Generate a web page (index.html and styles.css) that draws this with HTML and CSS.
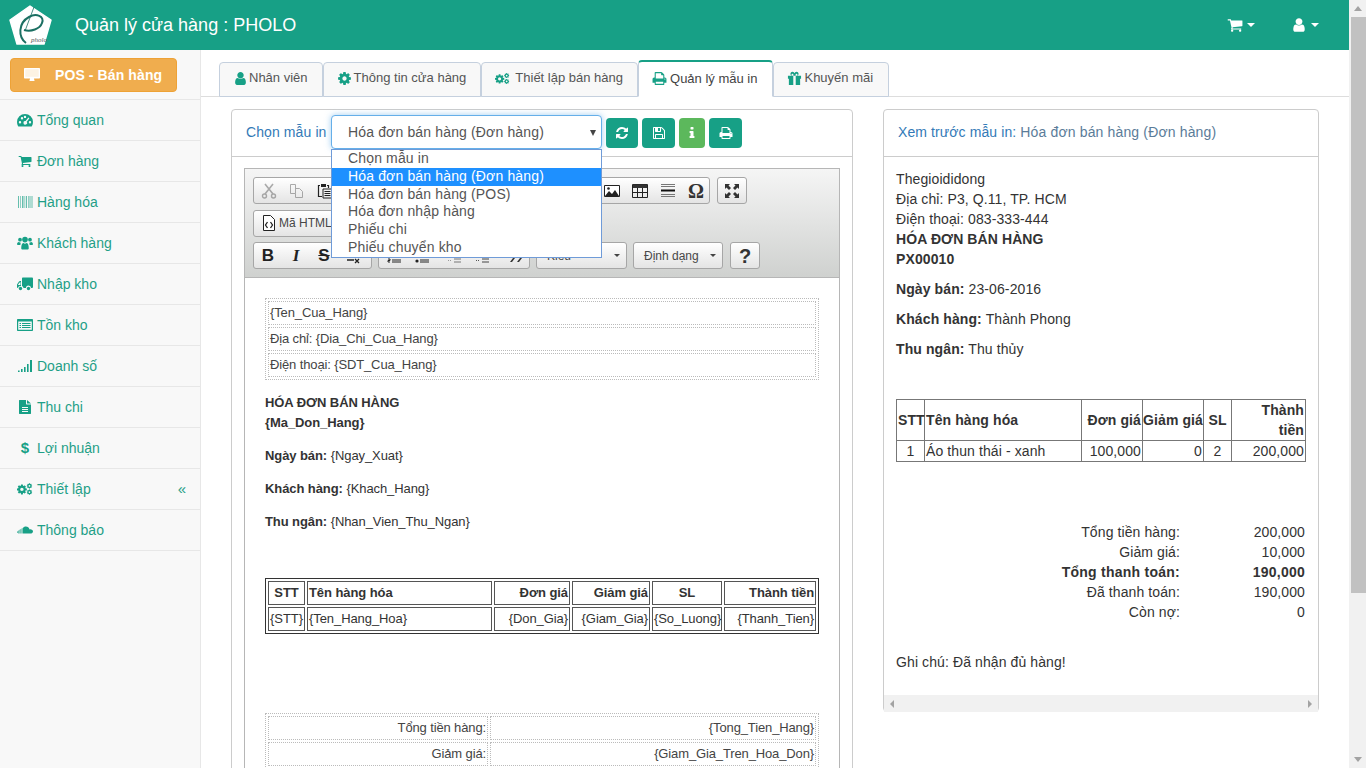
FILE: index.html
```html
<!DOCTYPE html>
<html lang="vi">
  <head>
    <meta charset="UTF-8" />
    <title>Quản lý cửa hàng : PHOLO</title>
    <link rel="stylesheet" href="styles.css">
  </head>
  <body>
    <svg class="sprites" aria-hidden="true">
      <symbol id="i-user" viewBox="0 0 1792 1792"><path d="M1536 1399q0 109-62.5 187t-150.5 78h-854q-88 0-150.5-78t-62.5-187q0-85 8.5-160.5t31.5-152 58.5-131 94-89 134.5-34.5q131 128 313 128t313-128q76 0 134.5 34.5t94 89 58.5 131 31.5 152 8.5 160.5zm-256-887q0 159-112.5 271.5t-271.5 112.5-271.5-112.5-112.5-271.5 112.5-271.5 271.5-112.5 271.5 112.5 112.5 271.5z"/></symbol>
      <symbol id="i-cart" viewBox="0 0 1792 1792"><path d="M704 1536q0 52-38 90t-90 38-90-38-38-90 38-90 90-38 90 38 38 90zm896 0q0 52-38 90t-90 38-90-38-38-90 38-90 90-38 90 38 38 90zm128-1088v512q0 24-16.5 42.5t-40.5 21.5l-1044 122q13 60 13 70 0 16-24 64h920q26 0 45 19t19 45-19 45-45 19h-1024q-26 0-45-19t-19-45q0-11 8-31.5t16-36 21.5-40 15.5-29.5l-177-823h-204q-26 0-45-19t-19-45 19-45 45-19h256q16 0 28.5 6.5t19.5 15.5 13 24.5 8 26 5.5 29.5 4.5 26h1201q26 0 45 19t19 45z"/></symbol>
      <symbol id="i-print" viewBox="0 0 1792 1792"><path d="M448 1536h896v-256h-896v256zm0-640h896v-384h-160q-40 0-68-28t-28-68v-160h-640v640zm1152 64q0-26-19-45t-45-19-45 19-19 45 19 45 45 19 45-19 19-45zm128 0v416q0 13-9.5 22.5t-22.5 9.5h-224v160q0 40-28 68t-68 28h-960q-40 0-68-28t-28-68v-160h-224q-13 0-22.5-9.5t-9.5-22.5v-416q0-79 56.5-135.5t135.5-56.5h64v-544q0-40 28-68t68-28h672q40 0 88 20t76 48l152 152q28 28 48 76t20 88v256h64q79 0 135.5 56.5t56.5 135.5z"/></symbol>
      <symbol id="i-refresh" viewBox="0 0 1792 1792"><path d="M1639 1056q0 5-1 7-64 268-268 434.5t-478 166.5q-146 0-282.5-55t-243.5-157l-129 129q-19 19-45 19t-45-19-19-45v-448q0-26 19-45t45-19h448q26 0 45 19t19 45-19 45l-137 137q71 66 161 102t187 36q134 0 250-65t186-179q11-17 53-117 8-23 30-23h192q13 0 22.5 9.5t9.5 22.5zm25-800v448q0 26-19 45t-45 19h-448q-26 0-45-19t-19-45 19-45l138-138q-148-137-349-137-134 0-250 65t-186 179q-11 17-53 117-8 23-30 23h-199q-13 0-22.5-9.5t-9.5-22.5v-7q65-268 270-434.5t480-166.5q146 0 284 55.5t245 156.5l130-129q19-19 45-19t45 19 19 45z"/></symbol>
      <symbol id="i-save" viewBox="0 0 1792 1792"><path d="M512 1536h768v-384h-768v384zm896 0h128v-896q0-14-10-38.5t-20-34.5l-281-281q-10-10-34-20t-39-10v416q0 40-28 68t-68 28h-576q-40 0-68-28t-28-68v-416h-128v1280h128v-416q0-40 28-68t68-28h832q40 0 68 28t28 68v416zm-384-928v-320q0-13-9.5-22.5t-22.5-9.5h-192q-13 0-22.5 9.5t-9.5 22.5v320q0 13 9.5 22.5t22.5 9.5h192q13 0 22.5-9.5t9.5-22.5zm640 32v928q0 40-28 68t-68 28h-1344q-40 0-68-28t-28-68v-1344q0-40 28-68t68-28h928q40 0 88 20t76 48l280 280q28 28 48 76t20 88z"/></symbol>
      <symbol id="i-info" viewBox="0 0 1792 1792"><path d="M1216 1344v128q0 26-19 45t-45 19h-512q-26 0-45-19t-19-45v-128q0-26 19-45t45-19h64v-384h-64q-26 0-45-19t-19-45v-128q0-26 19-45t45-19h384q26 0 45 19t19 45v576h64q26 0 45 19t19 45zm-128-1152v192q0 26-19 45t-45 19h-256q-26 0-45-19t-19-45v-192q0-26 19-45t45-19h256q26 0 45 19t19 45z"/></symbol>
      <symbol id="i-cog" viewBox="0 0 1792 1792"><path d="M1152 896q0-106-75-181t-181-75-181 75-75 181 75 181 181 75 181-75 75-181zm512-109v222q0 12-8 23t-20 13l-185 28q-19 54-39 91 35 50 107 138 10 12 10 25t-9 23q-27 37-99 108t-94 71q-12 0-26-9l-138-108q-44 23-91 38-16 136-29 186-7 28-36 28h-222q-14 0-24.5-8.5t-11.5-21.5l-28-184q-49-16-90-37l-141 107q-10 9-25 9-14 0-25-11-126-114-165-168-7-10-7-23 0-12 8-23 15-21 51-66.5t54-70.5q-27-50-41-99l-183-27q-13-2-21-12.5t-8-23.5v-222q0-12 8-23t19-13l186-28q14-46 39-92-40-57-107-138-10-12-10-24 0-10 9-23 26-36 98.5-107.5t94.5-71.5q13 0 26 10l138 107q44-23 91-38 16-136 29-186 7-28 36-28h222q14 0 24.5 8.5t11.5 21.5l28 184q49 16 90 37l142-107q9-9 24-9 13 0 25 10 129 119 165 170 7 8 7 22 0 12-8 23-15 21-51 66.5t-54 70.5q26 50 41 98l183 28q13 2 21 12.5t8 23.5z"/></symbol>
      <symbol id="i-cogs" viewBox="0 0 18 14">
        <use href="#i-cog" x="-1" y="1" width="13" height="13"/>
        <use href="#i-cog" x="10.5" y="0" width="7" height="7"/>
        <use href="#i-cog" x="10.5" y="7" width="7" height="7"/>
      </symbol>
      <symbol id="i-dash" viewBox="0 0 16 14"><path fill-rule="evenodd" d="M8 1a8 8 0 0 1 8 8c0 1.600-.4 3-1.100 4.200-.2.300-.5.400-.8.400H1.900c-.3 0-.6-.1-.8-.4C.4 12 0 10.600 0 9a8 8 0 0 1 8-8zM3 8a1.200 1.200 0 1 0 0 2.400A1.200 1.200 0 0 0 3 8zm2-4a1.200 1.200 0 1 0 0 2.400A1.200 1.200 0 0 0 5 4zm3-1.300a1.200 1.200 0 1 0 0 2.400 1.200 1.200 0 0 0 0-2.400zM11.400 4.500 8.600 8.100a1.800 1.800 0 1 0 1.100.7l2.700-3.600zM13 8a1.200 1.200 0 1 0 0 2.400A1.200 1.200 0 0 0 13 8z"/></symbol>
      <symbol id="i-users" viewBox="0 0 17 14"><circle cx="3.200" cy="3.500" r="2"/><circle cx="13.800" cy="3.500" r="2"/><circle cx="8.500" cy="3.400" r="3"/><path d="M0 9c0-2 .7-3 2-3 .7.500 1.300.7 2 .7-.2.600-.4 1.400-.4 2.300H1c-.6 0-1-.4-1-1zM17 9c0-2-.7-3-2-3-.7.500-1.300.7-2 .7.200.6.400 1.400.4 2.300H16c.6 0 1-.4 1-1zM4.500 12.500c0-3.500 1-5.500 2.500-5.500.5.500 1 .8 1.500.8S9.500 7.500 10 7c1.500 0 2.500 2 2.500 5.500 0 1-.6 1.500-1.500 1.500H6c-.9 0-1.500-.5-1.500-1.500z"/></symbol>
      <symbol id="i-truck" viewBox="0 0 16 14"><path d="M5 1.500C5 1 5.400.5 6 .5h9c.5 0 1 .5 1 1V10c0 .5-.5 1-1 1h-1a2.500 2.500 0 0 0-5 0H6.500a2.500 2.500 0 0 0-1.500-2zM4 4v5a2.500 2.500 0 0 0-3 2c-.5 0-1-.4-1-1V7.500L2 4.500C2.300 4.200 2.600 4 3 4zM3 5.200 1.200 7.200V8H3.500V5.200z"/><circle cx="3.500" cy="11.500" r="1.700"/><circle cx="11.500" cy="11.500" r="1.700"/></symbol>
      <symbol id="i-list" viewBox="0 0 16 14"><path fill-rule="evenodd" d="M1 1h14c.6 0 1 .4 1 1v10c0 .6-.4 1-1 1H1c-.6 0-1-.4-1-1V2c0-.6.400-1 1-1zm.2 2.500v8.300h13.600V3.500zM2.500 5H4v1.100H2.500zm0 2H4v1.100H2.500zm0 2H4v1.100H2.500zM5 5h8.500v1.100H5zm0 2h8.500v1.100H5zm0 2h8.500v1.100H5z"/></symbol>
      <symbol id="i-file" viewBox="0 0 12 14"><path fill-rule="evenodd" d="M0 .5C0 .2.200 0 .5 0H7v4c0 .3.200.5.500.5H12v9c0 .3-.2.500-.5.500h-11c-.3 0-.5-.2-.5-.500zM3 7v1h6V7zm0 2v1h6V9zm0 2v1h6v-1zM8 0l4 3.500H8z"/></symbol>
      <symbol id="i-cloud" viewBox="0 0 18 9"><path d="M6.500 8.500V2.200C7.300 1.200 8.500.5 10 .5c2 0 3.700 1.400 4.100 3.300.3-.1.600-.1.900-.1 1.600 0 3 1.100 3 2.400s-1.400 2.400-3 2.400zM5.300 8.500V2.500h.7v6zM4 8.500v-5h.7v5zM2.800 8.500V4.200h.7v4.300zM1.500 8.500V5h.7v3.500zM.3 8V6h.7v2z"/></symbol>
      <symbol id="i-gift" viewBox="-1 -1 16 16"><path fill-rule="evenodd" d="M0 4h4.200A2.200 2.200 0 1 1 7 1.500 2.200 2.200 0 1 1 9.800 4H14v3.200h-1V14H1V7.200H0zM5.800 4H4.600A1 1 0 1 1 5.800 2.800zM8.200 4V2.800A1 1 0 1 1 9.400 4zM5.700 4v10h2.600V4z"/></symbol>
    </svg>

    <div class="page">
      <header class="topbar">
        <svg class="logo" viewBox="0 0 44 44">
          <path d="M21 3 42 17 35 41H8L1 17z" fill="#fff" stroke="#fff" stroke-width="1.500" stroke-linejoin="round"/>
          <path d="M17 40C9 34 9 20 20 14 27 10 36 13 33 20 31 26 22 29 15 27" fill="none" stroke="#1b6f62" stroke-width="2"/>
          <path d="M25 4 16 28" fill="none" stroke="#1b6f62" stroke-width=".8"/>
          <text class="logo-text" x="22" y="39">pholo</text>
        </svg>
        <span class="brand">Quản lý cửa hàng : PHOLO</span>
        <div class="top-actions">
          <span class="top-item"><svg class="ico"><use href="#i-cart"/></svg><i class="caret"></i></span>
          <span class="top-item"><svg class="ico"><use href="#i-user"/></svg><i class="caret"></i></span>
        </div>
      </header>

      <div class="main">
        <aside class="sidebar">
          <div class="pos-wrap">
            <a class="pos-btn">
              <svg class="pos-ico" viewBox="0 0 16 14"><path d="M1 0h14c.6 0 1 .4 1 1v8.500c0 .6-.4 1-1 1H10c0 1 .6 1.500.6 2 0 .3-.2.500-.5.500H5.900c-.3 0-.5-.2-.5-.5 0-.5.600-1 .600-2H1c-.6 0-1-.4-1-1V1c0-.6.400-1 1-1z"/><path d="M1.300 1.300h13.400v7.500H1.300z" fill="#fdf3e3"/></svg>
              POS - Bán hàng
            </a>
          </div>
          <nav class="nav">
            <a class="nav-item"><svg class="nav-ico"><use href="#i-dash"/></svg>Tổng quan</a>
            <a class="nav-item"><svg class="nav-ico"><use href="#i-cart"/></svg>Đơn hàng</a>
            <a class="nav-item">
              <svg class="nav-ico nav-bars" viewBox="0 0 16 14"><path d="M1 1h1v12H1zM3 1h.7v12H3zM5 1h1.500v12H5zM7.500 1h.7v12h-.7zM9 1h1v12H9zM11 1h.7v12H11zM12.500 1h1v12h-1zM14.500 1h1v12h-1z"/></svg>
              Hàng hóa</a>
            <a class="nav-item"><svg class="nav-ico"><use href="#i-users"/></svg>Khách hàng</a>
            <a class="nav-item"><svg class="nav-ico"><use href="#i-truck"/></svg>Nhập kho</a>
            <a class="nav-item"><svg class="nav-ico"><use href="#i-list"/></svg>Tồn kho</a>
            <a class="nav-item">
              <svg class="nav-ico" viewBox="0 0 16 14"><path d="M1 11.500h1.600V13H1zM4 10h1.600v3H4zM7 8h1.600v5H7zM10 5h1.600v8H10zM13 1h2v12h-2z"/></svg>
              Doanh số</a>
            <a class="nav-item"><svg class="nav-ico"><use href="#i-file"/></svg>Thu chi</a>
            <a class="nav-item"><span class="nav-ico nav-dollar">$</span>Lợi nhuận</a>
            <a class="nav-item"><svg class="nav-ico"><use href="#i-cogs"/></svg>Thiết lập<span class="nav-arrow">«</span></a>
            <a class="nav-item"><svg class="nav-ico"><use href="#i-cloud"/></svg>Thông báo</a>
          </nav>
        </aside>

        <section class="content">
          <div class="tabs">
            <a class="tab tab-user"><svg class="tab-ico"><use href="#i-user"/></svg>Nhân viên</a>
            <a class="tab"><svg class="tab-ico"><use href="#i-cog"/></svg>Thông tin cửa hàng</a>
            <a class="tab tab-cogs"><svg class="tab-ico"><use href="#i-cogs"/></svg>Thiết lập bán hàng</a>
            <a class="tab tab-active"><svg class="tab-ico"><use href="#i-print"/></svg>Quản lý mẫu in</a>
            <a class="tab tab-last"><svg class="tab-ico"><use href="#i-gift"/></svg>Khuyến mãi</a>
          </div>

          <div class="columns">
            <div class="panel panel-edit">
              <div class="panel-head">
                <span class="head-label">Chọn mẫu in</span>
                <div class="select-box">
                  <div class="select-value">Hóa đơn bán hàng (Đơn hàng)<i class="select-arrow"></i></div>
                  <ul class="select-list">
                    <li>Chọn mẫu in</li>
                    <li class="selected">Hóa đơn bán hàng (Đơn hàng)</li>
                    <li>Hóa đơn bán hàng (POS)</li>
                    <li>Hóa đơn nhập hàng</li>
                    <li>Phiếu chi</li>
                    <li>Phiếu chuyển kho</li>
                  </ul>
                </div>
                <a class="btn btn-a"><svg class="btn-ico"><use href="#i-refresh"/></svg></a>
                <a class="btn btn-b"><svg class="btn-ico"><use href="#i-save"/></svg></a>
                <a class="btn btn-c"><svg class="btn-ico"><use href="#i-info"/></svg></a>
                <a class="btn btn-b"><svg class="btn-ico"><use href="#i-print"/></svg></a>
              </div>

              <div class="panel-body">
                <div class="editor">
                  <div class="toolbar">
                    <div class="tool-row">
                      <div class="tool-group tg-main">
                        <svg class="cke dim" viewBox="0 0 16 16"><path d="M4 1l8 10M12 1 4 11" stroke="#777" stroke-width="1.600" fill="none"/><circle cx="3.500" cy="13" r="2" fill="none" stroke="#777" stroke-width="1.400"/><circle cx="12.500" cy="13" r="2" fill="none" stroke="#777" stroke-width="1.400"/></svg>
                        <svg class="cke dim" viewBox="0 0 16 16"><path d="M1.500 1.500h5v9h-5zM6.500 5.500h4l3 3v6h-7v-4" fill="none" stroke="#777"/></svg>
                        <svg class="cke" viewBox="0 0 16 16"><path d="M3 2.500H1.500v11H5M10 2.500h1.500V5" fill="none" stroke="#222" stroke-width="1.200"/><path d="M4 1h5v3H4z" fill="#222"/><path d="M6 6h9v9H6zM7.500 8.500h6M7.500 10.500h6M7.500 12.500h6" fill="none" stroke="#222"/></svg>
                        <span class="tool-spacer"></span>
                        <svg class="cke" viewBox="0 0 16 16"><path d="M.5 2.500h15v11H.5z" fill="#fff" stroke="#222"/><path d="M1 13l4-5 3 3 3-4 4 6z" fill="#222"/><circle cx="4.500" cy="5.500" r="1.300" fill="#222"/></svg>
                        <svg class="cke" viewBox="0 0 16 16"><path d="M.5 1.500h15v13H.5z" fill="none" stroke="#222"/><path d="M1 1.500h14V5H1z" fill="#333"/><path d="M1 9.500h14M5.500 5v9M10.500 5v9" stroke="#222"/></svg>
                        <svg class="cke" viewBox="0 0 16 16"><path d="M1 1.500h14M1 3.500h14M1 11.500h14M1 13.500h14" stroke="#777"/><path d="M1 7.500h14" stroke="#111" stroke-width="2"/></svg>
                        <span class="cke-omega">Ω</span>
                      </div>
                      <div class="tool-group tg-max">
                        <svg class="cke" viewBox="0 0 16 16"><path d="M1 1h5L4.500 2.500 7 5 5 7 2.500 4.500 1 6zM15 1v5l-1.500-1.500L11 7 9 5l2.500-2.500L10 1zM1 15v-5l1.500 1.500L5 9l2 2-2.500 2.500L6 15zM15 15h-5l1.500-1.500L9 11l2-2 2.500 2.500L15 10z" fill="#333"/></svg>
                      </div>
                    </div>
                    <div class="tool-row">
                      <div class="tool-group tg-source">
                        <svg class="cke" viewBox="0 0 16 16"><path d="M2.500.5h7l4 4v11h-11z" fill="#fff" stroke="#222"/><path d="M6.500 7 4.500 10l2 3M9.500 7l2 3-2 3" fill="none" stroke="#222" stroke-width="1.300"/></svg>
                        <span class="source-label">Mã HTML</span>
                      </div>
                    </div>
                    <div class="tool-row">
                      <div class="tool-group tg-basic">
                        <span class="fmt fmt-b">B</span><span class="fmt fmt-i">I</span><span class="fmt fmt-s">S</span>
                        <svg class="cke" viewBox="0 0 16 16"><path d="M4 1.500h8M8 1.500v8M2 12h7" stroke="#222" stroke-width="1.500"/><path d="M10 11l4 4M14 11l-4 4" stroke="#222" stroke-width="1.300"/></svg>
                      </div>
                      <div class="tool-group tg-lists">
                        <svg class="cke" viewBox="0 0 16 16"><path d="M2 11h2v1.500H2V14h2M6 12h9M6 14h9" fill="none" stroke="#222"/></svg>
                        <svg class="cke" viewBox="0 0 16 16"><path d="M6 12h9M6 14h9" stroke="#222"/><circle cx="3" cy="13" r="1.600" fill="#222"/></svg>
                        <span class="tool-sep"></span>
                        <svg class="cke" viewBox="0 0 16 16"><path d="M7 11h7M7 14h7" stroke="#777"/><path d="M1 12.500h4" stroke="#999" stroke-dasharray="1 1"/></svg>
                        <svg class="cke" viewBox="0 0 16 16"><path d="M7 11h7M7 14h7" stroke="#444"/><path d="M1 12.500h4" stroke="#555" stroke-dasharray="1 1"/></svg>
                        <span class="tool-sep"></span>
                        <svg class="cke" viewBox="0 0 16 16"><path d="M2 14l3-4h2l-3 4zM9 14l3-4h2l-3 4z" fill="#333"/></svg>
                      </div>
                      <div class="combo combo-style"><span class="combo-text">Kiểu</span><i class="combo-arrow"></i></div>
                      <div class="combo combo-format"><span class="combo-text">Định dạng</span><i class="combo-arrow"></i></div>
                      <div class="tool-group tg-help">?</div>
                    </div>
                  </div>

                  <div class="doc">
                    <table class="dotted">
                      <tr><td>{Ten_Cua_Hang}</td></tr>
                      <tr><td>Địa chỉ: {Dia_Chi_Cua_Hang}</td></tr>
                      <tr><td>Điện thoại: {SDT_Cua_Hang}</td></tr>
                    </table>
                    <p class="doc-p doc-title"><b>HÓA ĐƠN BÁN HÀNG</b><br><b>{Ma_Don_Hang}</b></p>
                    <p class="doc-p"><b>Ngày bán:</b> {Ngay_Xuat}</p>
                    <p class="doc-p"><b>Khách hàng:</b> {Khach_Hang}</p>
                    <p class="doc-p"><b>Thu ngân:</b> {Nhan_Vien_Thu_Ngan}</p>

                    <table class="solid">
                      <tr>
                        <th class="c1">STT</th><th class="c2 left">Tên hàng hóa</th><th class="c3 right">Đơn giá</th>
                        <th class="c4 right">Giảm giá</th><th class="c5">SL</th><th class="c6 right">Thành tiền</th>
                      </tr>
                      <tr>
                        <td class="center">{STT}</td><td>{Ten_Hang_Hoa}</td><td class="right">{Don_Gia}</td>
                        <td class="right">{Giam_Gia}</td><td class="center">{So_Luong}</td><td class="right">{Thanh_Tien}</td>
                      </tr>
                    </table>

                    <table class="dotted totals">
                      <tr><td class="t1 right">Tổng tiền hàng:</td><td class="right">{Tong_Tien_Hang}</td></tr>
                      <tr><td class="t1 right">Giảm giá:</td><td class="right">{Giam_Gia_Tren_Hoa_Don}</td></tr>
                    </table>
                  </div>
                </div>
              </div>
            </div>

            <div class="panel panel-preview">
              <div class="panel-head preview-head">Xem trước mẫu in: <span class="preview-name">Hóa đơn bán hàng (Đơn hàng)</span></div>
              <div class="preview-body">
                <div class="invoice">
                  <div>Thegioididong</div>
                  <div>Địa chỉ: P3, Q.11, TP. HCM</div>
                  <div>Điện thoại: 083-333-444</div>
                  <div><b>HÓA ĐƠN BÁN HÀNG</b></div>
                  <div><b>PX00010</b></div>
                  <p class="inv-p"><b>Ngày bán:</b> 23-06-2016</p>
                  <p class="inv-p"><b>Khách hàng:</b> Thành Phong</p>
                  <p class="inv-p"><b>Thu ngân:</b> Thu thủy</p>

                  <table class="inv-table">
                    <tr>
                      <th class="p1">STT</th><th class="p2 left">Tên hàng hóa</th><th class="p3 right">Đơn giá</th>
                      <th class="p4">Giảm giá</th><th class="p5">SL</th><th class="p6 right">Thành tiền</th>
                    </tr>
                    <tr>
                      <td class="center">1</td><td>Áo thun thái - xanh</td><td class="right">100,000</td>
                      <td class="right">0</td><td class="center">2</td><td class="right">200,000</td>
                    </tr>
                  </table>

                  <div class="inv-totals">
                    <div class="tot-row"><span class="tot-label">Tổng tiền hàng:</span><span class="tot-val">200,000</span></div>
                    <div class="tot-row"><span class="tot-label">Giảm giá:</span><span class="tot-val">10,000</span></div>
                    <div class="tot-row tot-bold"><span class="tot-label">Tổng thanh toán:</span><span class="tot-val">190,000</span></div>
                    <div class="tot-row"><span class="tot-label">Đã thanh toán:</span><span class="tot-val">190,000</span></div>
                    <div class="tot-row"><span class="tot-label">Còn nợ:</span><span class="tot-val">0</span></div>
                  </div>
                  <p class="inv-note">Ghi chú: Đã nhận đủ hàng!</p>
                </div>
                <div class="hscroll"><i class="arrow-l"></i><i class="arrow-r"></i></div>
              </div>
            </div>
          </div>
        </section>
      </div>
    </div>

    <div class="vscroll">
      <i class="arrow-up"></i>
      <div class="vthumb"></div>
      <i class="arrow-down"></i>
    </div>
  </body>
</html>
```

FILE: styles.css
```css
:root {
  --green: #17a086;
  --green-text: #1f9f87;
  --line: #ddd;
  --panel-line: #ccc;
  --text: #333;
}

* {
  box-sizing: border-box;
}

html,
body {
  height: 768px;
  margin: 0;
  overflow: hidden;
}

body {
  display: flex;
  font-family: "Liberation Sans", Arial, sans-serif;
  font-size: 14px;
  line-height: 20px;
  color: var(--text);
  background: #fff;
}

table {
  border-collapse: separate;
}

.sprites {
  display: none;
}

.page {
  width: 1349px;
  height: 768px;
  overflow: hidden;
}

/* top bar */
.topbar {
  display: flex;
  align-items: center;
  height: 50px;
  padding: 0 0 0 9px;
  background: var(--green);
  color: #fff;
}

.logo {
  width: 44px;
  height: 46px;
}

.logo-text {
  font-family: "Liberation Serif", serif;
  font-size: 7px;
  font-style: italic;
  fill: #555;
}

.brand {
  margin-left: 22px;
  font-size: 18px;
}

.top-actions {
  display: flex;
  margin-left: auto;
  padding-right: 30px;
  gap: 36px;
}

.top-item {
  display: flex;
  align-items: center;
  gap: 4px;
}

.ico {
  width: 16px;
  height: 16px;
  fill: #fff;
}

.caret {
  width: 0;
  height: 0;
  border-top: 4.500px solid #fff;
  border-left: 4px solid transparent;
  border-right: 4px solid transparent;
}

/* sidebar */
.main {
  display: flex;
  height: 718px;
}

.sidebar {
  flex: 0 0 201px;
  background: #f8f8f8;
  border-right: 1px solid #e7e7e7;
}

.pos-wrap {
  height: 50px;
  padding: 8px 23px 0 10px;
  border-bottom: 1px solid #e7e7e7;
}

.pos-btn {
  display: flex;
  align-items: center;
  height: 34px;
  padding-left: 13px;
  background: #f0ad4e;
  border: 1px solid #eea236;
  border-radius: 4px;
  color: #fff;
  font-weight: bold;
  letter-spacing: 0.1px;
}

.pos-ico {
  width: 16px;
  height: 14px;
  margin-right: 15px;
  fill: #fff;
}

.nav-item {
  display: flex;
  align-items: center;
  height: 41px;
  padding-left: 17px;
  border-bottom: 1px solid #e7e7e7;
  color: var(--green-text);
}

.nav-ico {
  flex: none;
  width: 16px;
  height: 14px;
  margin-right: 4px;
  fill: var(--green);
}

.nav-bars {
  opacity: 0.65;
}

.nav-dollar {
  height: auto;
  font-weight: bold;
  font-size: 15px;
  text-align: center;
  color: var(--green);
}

.nav-arrow {
  margin-left: auto;
  margin-right: 14px;
  font-size: 15px;
  line-height: 14px;
}

/* tabs */
.content {
  flex: 1;
  min-width: 0;
  letter-spacing: 0.1px;
}

.tabs {
  display: flex;
  height: 47px;
  padding: 12px 0 0 18px;
  border-bottom: 1px solid var(--line);
  margin-bottom: 12px;
  letter-spacing: 0;
}

.tab {
  display: flex;
  align-items: center;
  height: 35px;
  padding: 0 14px 3px 13px;
  background: #f8f8f8;
  border: 1px solid #c5d0de;
  border-radius: 4px 4px 0 0;
  color: #555;
  font-size: 13px;
}

.tab-ico {
  width: 15px;
  height: 15px;
  margin-right: 2px;
  fill: var(--green);
}

.tab-user .tab-ico {
  margin-right: 1px;
}

.tab-cogs .tab-ico {
  margin-right: 5px;
}

.tab-active .tab-ico {
  margin-right: 3px;
}

.tab-last {
  padding-right: 15px;
}

.tab-active {
  position: relative;
  height: 37px;
  margin-top: -2px;
  padding-right: 15px;
  padding-bottom: 1px;
  background: #fff;
  border-top: 2px solid var(--green);
  border-bottom-color: #fff;
  color: #444;
}

.columns {
  display: flex;
  align-items: flex-start;
  padding-left: 30px;
}

.panel {
  background: #fff;
  border: 1px solid var(--panel-line);
  border-radius: 4px;
}

.panel-edit {
  width: 622px;
}

.panel-preview {
  width: 436px;
  margin-left: 30px;
  height: 603px;
}

.panel-head {
  display: flex;
  align-items: center;
  height: 47px;
  padding-left: 14px;
  border-bottom: 1px solid var(--panel-line);
}

.head-label {
  width: 85px;
  margin-bottom: 2px;
  color: #337ab7;
}

/* fake open select */
.select-box {
  position: relative;
  width: 271px;
  margin-right: 4px;
  margin-bottom: 2px;
  letter-spacing: 0.15px;
}

.select-value {
  position: relative;
  height: 34px;
  padding: 6px 16px;
  background: #fff;
  border: 1px solid #66afe9;
  border-radius: 4px;
  box-shadow: 0 0 6px rgba(102, 175, 233, 0.6);
  color: #555;
}

.select-arrow {
  position: absolute;
  right: 5px;
  top: 14px;
  border-top: 6px solid #444;
  border-left: 3px solid transparent;
  border-right: 3px solid transparent;
}

.select-list {
  position: absolute;
  z-index: 5;
  left: 0;
  right: 0;
  top: 34px;
  margin: 0;
  padding: 0;
  list-style: none;
  background: #fff;
  border: 1px solid #6f9bd8;
  color: #555;
}

.select-list li {
  height: 17.830px;
  padding-left: 16px;
  line-height: 16px;
}

.select-list .selected {
  background: #1e90ff;
  color: #fff;
}

.btn {
  display: flex;
  align-items: center;
  justify-content: center;
  height: 30px;
  margin-right: 4px;
  border-radius: 4px;
}

.btn-a {
  width: 32px;
}

.btn-a,
.btn-b {
  background: var(--green);
}

.btn-b {
  width: 33px;
}

.btn-c {
  width: 26px;
  background: #5cb85c;
}

.btn-ico {
  width: 14px;
  height: 14px;
  fill: #fff;
}

/* editor */
.panel-body {
  padding: 11px 12px 12px;
}

.editor {
  border: 1px solid #b6b6b6;
  letter-spacing: 0;
}

.toolbar {
  height: 109px;
  padding: 8px 8px 0;
  background: linear-gradient(#f5f5f5, #cfd1cf);
  border-bottom: 1px solid #b6b6b6;
}

.tool-row {
  display: flex;
  height: 27px;
  margin-bottom: 5.500px;
  gap: 6px;
}

.tool-group {
  display: flex;
  align-items: center;
  height: 27px;
  padding: 0 5px 0 7px;
  background: linear-gradient(#fff, #e4e4e4);
  border: 1px solid #a6a6a6;
  border-radius: 3px;
}

.tg-main {
  width: 457px;
  gap: 12px;
}

.tool-spacer {
  flex: 1;
}

.tg-max {
  width: 30px;
  margin-left: 1px;
  padding: 0 6px;
}

.tg-source {
  width: 90px;
  gap: 2px;
}

.tg-basic {
  width: 119px;
  gap: 14px;
}

.tg-lists {
  width: 152px;
  gap: 12px;
}

.tg-help {
  justify-content: center;
  width: 30px;
  margin-left: 1px;
  padding: 0;
  font-size: 20px;
  font-weight: bold;
}

.cke {
  flex: none;
  width: 16px;
  height: 16px;
}

.dim {
  opacity: 0.6;
}

.cke-omega {
  width: 16px;
  font-family: "Liberation Serif", serif;
  font-size: 20px;
  font-weight: bold;
  text-align: center;
  color: #333;
}

.source-label {
  font-size: 12px;
  color: #474747;
}

.fmt {
  width: 14px;
  font-size: 17px;
  text-align: center;
  color: #222;
}

.fmt-b {
  font-weight: bold;
}

.fmt-i {
  font-family: "Liberation Serif", serif;
  font-style: italic;
  font-weight: bold;
}

.fmt-s {
  font-weight: bold;
  text-decoration: line-through;
}

.tool-sep {
  width: 1px;
  height: 18px;
  margin: 0 -4px 0 -3px;
  background: #bbb;
}

.combo {
  display: flex;
  align-items: center;
  justify-content: space-between;
  height: 27px;
  padding: 0 6px 0 10px;
  background: linear-gradient(#fff, #e4e4e4);
  border: 1px solid #a6a6a6;
  border-radius: 3px;
  font-size: 12px;
  color: #484848;
}

.combo-style {
  width: 91px;
}

.combo-format {
  width: 90px;
}

.combo-arrow {
  border-top: 3px solid #444;
  border-left: 3px solid transparent;
  border-right: 3px solid transparent;
}

/* the doc runs past the bottom of the window, the page clips it */
.doc {
  height: 520px;
  padding: 20px;
  font-size: 13px;
  line-height: 20px;
  letter-spacing: -0.08px;
}

.dotted {
  width: 100%;
  border: 1px dotted #bbb;
  border-spacing: 2px;
  color: #444;
  letter-spacing: -0.13px;
}

.dotted td {
  height: 24px;
  padding: 1px;
  border: 1px dotted #bbb;
}

.totals {
  margin-top: 79px;
}

.t1 {
  width: 220px;
}

.doc-p {
  margin: 0 0 13px;
}

.doc-title {
  margin-top: 13px;
}

.solid {
  width: 100%;
  margin-top: 46px;
  table-layout: fixed;
  border: 1px solid #333;
  border-spacing: 2px;
}

.solid th,
.solid td {
  height: 24px;
  padding: 1px;
  border: 1px solid #555;
}

.solid th {
  text-align: center;
}

.left {
  text-align: left !important;
}

.right {
  text-align: right !important;
}

.center {
  text-align: center;
}

.c1 { width: 37px; }
.c2 { width: 185px; }
.c3 { width: 76px; }
.c4 { width: 78px; }
.c5 { width: 70px; }
.c6 { width: 92px; }

/* preview */
.preview-head {
  padding-bottom: 2px;
  color: #337ab7;
  white-space: pre;
}

.preview-name {
  color: #5b7c99;
  letter-spacing: 0.15px;
}

.preview-body {
  position: relative;
  height: 555px;
}

.invoice {
  padding: 12px 13px 12px 12px;
}

.inv-p {
  margin: 10px 0;
}

.inv-table {
  width: 409px;
  margin-top: 40px;
  border-collapse: collapse;
  border: 1px solid #222;
  table-layout: fixed;
}

.inv-table th,
.inv-table td {
  padding: 0 1px;
  border: 1px solid #777;
  line-height: 20px;
}

.inv-table .p4 {
  padding: 0;
  white-space: nowrap;
}

.p1 { width: 28px; }
.p2 { width: 157px; }
.p3 { width: 61px; }
.p4 { width: 61px; }
.p5 { width: 28px; }
.p6 { width: 74px; }

.inv-totals {
  margin-top: 60px;
}

.tot-row {
  display: flex;
  justify-content: flex-end;
}

.tot-val {
  width: 125px;
  text-align: right;
}

.tot-bold {
  font-weight: bold;
  letter-spacing: 0.25px;
}

.inv-note {
  margin: 30px 0 0;
}

.hscroll {
  position: absolute;
  left: 0;
  right: 0;
  bottom: 0;
  height: 17px;
  background: #f1f1f1;
}

.arrow-l,
.arrow-r {
  position: absolute;
  top: 5px;
  border-top: 4px solid transparent;
  border-bottom: 4px solid transparent;
}

.arrow-l {
  left: 6px;
  border-right: 4px solid #a3a3a3;
}

.arrow-r {
  right: 6px;
  border-left: 4px solid #a3a3a3;
}

/* page scrollbar */
.vscroll {
  display: flex;
  flex-direction: column;
  align-items: center;
  flex: 0 0 17px;
  height: 768px;
  background: #f1f1f1;
}

.arrow-up,
.arrow-down {
  flex: none;
  height: 0;
  margin: 6px 0;
  border-left: 4px solid transparent;
  border-right: 4px solid transparent;
}

.arrow-up {
  border-bottom: 5px solid #a3a3a3;
}

.arrow-down {
  margin-top: auto;
  border-top: 5px solid #a3a3a3;
}

.vthumb {
  flex: none;
  width: 15px;
  height: 576px;
  margin-left: 2px;
  background: #c1c1c1;
}
```
